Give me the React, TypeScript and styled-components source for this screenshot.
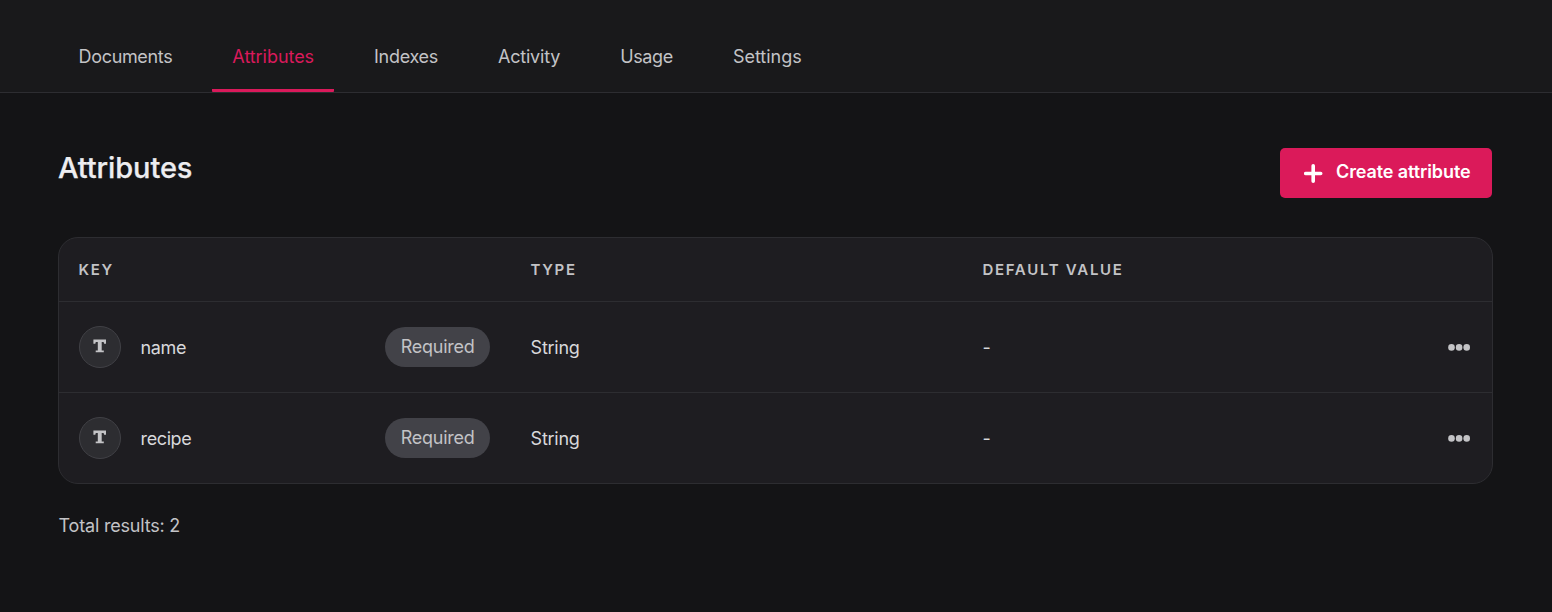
import React from "react";
import styled, { createGlobalStyle } from "styled-components";

const GlobalStyle = createGlobalStyle`
  * { box-sizing: border-box; }
  body {
    margin: 0;
    background: #141416;
    color: #d8d8db;
    font-family: Inter, "Liberation Sans", sans-serif;
    font-size: 18px;
    letter-spacing: -0.25px;
    line-height: 26px;
  }
`;

const Page = styled.div`
  display: flex;
  flex-direction: column;
  height: 612px;
  overflow: hidden;
`;

const TabBar = styled.nav`
  display: flex;
  gap: 20px;
  height: 93px;
  padding: 22px 58.6px 0;
  background: #19191b;
  border-bottom: 1px solid #2d2d31;
`;

const Tab = styled.a<{ $active?: boolean; $tracking: number }>`
  display: flex;
  align-items: center;
  height: 70px;
  padding: 3px 20px 0;
  letter-spacing: ${(p) => p.$tracking}px;
  color: ${(p) => (p.$active ? "#da1a5b" : "#c3c3c6")};
  border-bottom: 3px solid ${(p) => (p.$active ? "#da1a5b" : "transparent")};
  border-radius: 1px;
`;

const Main = styled.main`
  flex: 1;
  padding: 55px 59px 0 58px;
`;

const Header = styled.header`
  display: flex;
  justify-content: space-between;
  align-items: flex-start;
  padding-right: 1px;
  height: 89px;
`;

const Title = styled.h1`
  margin: 0;
  padding-top: 2px;
  font-size: 29px;
  font-weight: 500;
  line-height: 36px;
  letter-spacing: -0.1px;
  color: #ededf0;
  -webkit-text-stroke: 0.25px #ededf0;
`;

const CreateButton = styled.button`
  display: flex;
  align-items: center;
  gap: 13px;
  width: 212px;
  height: 50px;
  padding: 0 0 2px 24px;
  border: 0;
  border-radius: 5px;
  background: #db1a5a;
  color: #fff;
  font: 600 18px/26px Inter, sans-serif;
  letter-spacing: -0.1px;
  white-space: nowrap;
  svg { margin-top: 3px; }
`;

const Table = styled.section`
  border: 1px solid #2d2d31;
  border-radius: 20px;
  background: #1e1d21;
  overflow: hidden;
`;

const Row = styled.div<{ $head?: boolean }>`
  display: grid;
  grid-template-columns: 452px 452px 1fr auto;
  align-items: center;
  height: ${(p) => (p.$head ? "63px" : "91px")};
  padding: ${(p) => (p.$head ? "0 21px 0 19.4px" : "0 22px 0 19.6px")};
  & + & { border-top: 1px solid #2d2d31; }
`;

const ColumnName = styled.span`
  font-size: 15px;
  font-weight: 600;
  letter-spacing: 1.7px;
  color: #c3c3c6;
`;

const KeyCell = styled.div`
  display: flex;
  align-items: center;
  padding-right: 41px;
`;

const TypeBadge = styled.span`
  display: grid;
  place-items: center;
  width: 42px;
  height: 42px;
  margin-right: 20px;
  border: 1px solid #414146;
  border-radius: 50%;
  background: #2d2d31;
`;

const Tag = styled.span`
  margin-left: auto;
  width: 105px;
  height: 40px;
  padding-left: 1px;
  border-radius: 20px;
  background: #424248;
  color: #c3c3c6;
  line-height: 39px;
  text-align: center;
`;

const Value = styled.span`
  padding-top: 2px;
`;

const KeyName = styled(Value)`
  letter-spacing: -0.4px;
`;

const Total = styled.p`
  margin: 29px 0 0 0.6px;
  letter-spacing: -0.2px;
  color: #c3c3c6;
`;

const PlusIcon = () => (
  <svg width="19" height="19" viewBox="0 0 19 19">
    <path d="M9.2 1.8v15.4M1.7 9.5h15" stroke="#fff" strokeWidth="3.6" strokeLinecap="round" />
  </svg>
);

const TypeGlyph = styled.svg`
  margin-top: -3px;
`;

const TextIcon = () => (
  <TypeGlyph width="14" height="14" viewBox="0 0 14 14" fill="#c3c3c6">
    <path d="M.4.5h12.6v4.2h-1.9l-.5-1.6H8.7v8.4h2.1v1.8H2.7v-1.8H4.8V3.1H2.8l-.5 1.6H.4z" />
  </TypeGlyph>
);

const MoreIcon = () => (
  <svg width="22" height="8" viewBox="0 0 22 8" fill="#c3c3c6">
    <circle cx="3.5" cy="4.4" r="3.3" />
    <circle cx="11.1" cy="4.4" r="3.3" />
    <circle cx="18.7" cy="4.4" r="3.3" />
  </svg>
);

const tabs = [
  { label: "Documents", tracking: -0.34 },
  { label: "Attributes", tracking: -0.05 },
  { label: "Indexes", tracking: -0.3 },
  { label: "Activity", tracking: -0.2 },
  { label: "Usage", tracking: -0.36 },
  { label: "Settings", tracking: -0.02 },
];
const attributes = ["name", "recipe"];

export default function App() {
  return (
    <Page>
      <GlobalStyle />
      <TabBar>
        {tabs.map((t) => (
          <Tab key={t.label} $tracking={t.tracking} $active={t.label === "Attributes"}>
            {t.label}
          </Tab>
        ))}
      </TabBar>
      <Main>
        <Header>
          <Title>Attributes</Title>
          <CreateButton><PlusIcon />Create attribute</CreateButton>
        </Header>
        <Table>
          <Row $head>
            <ColumnName>KEY</ColumnName>
            <ColumnName>TYPE</ColumnName>
            <ColumnName>DEFAULT VALUE</ColumnName>
          </Row>
          {attributes.map((name) => (
            <Row key={name}>
              <KeyCell>
                <TypeBadge><TextIcon /></TypeBadge>
                <KeyName>{name}</KeyName>
                <Tag>Required</Tag>
              </KeyCell>
              <Value>String</Value>
              <Value>-</Value>
              <MoreIcon />
            </Row>
          ))}
        </Table>
        <Total>Total results: {attributes.length}</Total>
      </Main>
    </Page>
  );
}
